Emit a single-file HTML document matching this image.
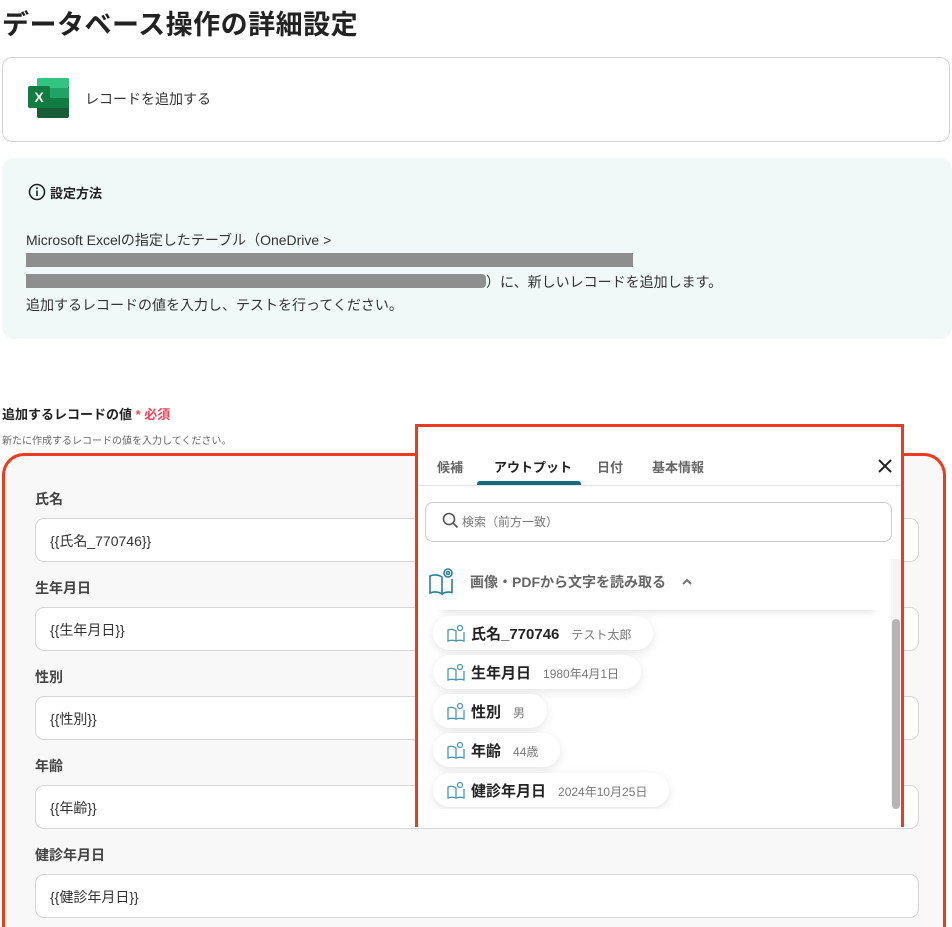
<!DOCTYPE html>
<html><head><meta charset="utf-8"><style>
*{box-sizing:border-box;margin:0;padding:0}
html,body{width:952px;height:927px;overflow:hidden}
body{background:#fff;font-family:"Liberation Sans","Noto Sans CJK JP",sans-serif;color:#222;position:relative}
.abs{position:absolute}
h1{position:absolute;left:2px;top:3px;font-size:27px;font-weight:bold;color:#222;letter-spacing:0.5px}
.card{left:2px;top:57px;width:948px;height:85px;border:1px solid #d4d4d4;border-radius:10px}
.info{left:2px;top:158px;width:950px;height:181px;background:#f0f8f8;border-radius:12px}
.t{font-size:14px;color:#333}
.bar{background:#8e8e8e;height:14px}
.form{left:2px;top:453px;width:944px;height:474px;border:3px solid #f03a1e;border-bottom:none;border-radius:22px 22px 0 0;background:#f8f8f8}
.lbl{font-size:14px;font-weight:bold;color:#444;left:35px}
.inp{left:35px;width:884px;height:44px;background:#fff;border:1px solid #d6d6d6;border-radius:9px;font-size:14px;color:#333;padding:12px 14px}
.pop{left:415px;top:424px;width:489px;height:403px;border:3px solid #f03a1e;background:#fff}
.tab{top:30px;font-size:13px;color:#555;font-weight:bold}
.pill{left:15px;height:34px;border-radius:17px;background:#fff;box-shadow:0 3px 10px rgba(0,0,0,.1);font-size:15px;font-weight:bold;color:#222;padding:7px 22px 0 14px;white-space:nowrap}
.pill small{font-size:12px;color:#777;font-weight:normal;margin-left:12px}
.pill svg{vertical-align:-3px;margin-right:6px}
</style></head><body>
<h1>データベース操作の詳細設定</h1>
<div class="abs card">
 <svg class="abs" style="left:25px;top:20px" width="42" height="40" viewBox="0 0 42 40">
  <rect x="9" y="0" width="32" height="40" rx="2" fill="#185c37"/>
  <rect x="9" y="0" width="32" height="10" fill="#33c481" rx="2"/>
  <rect x="25" y="10" width="16" height="10" fill="#21a366"/>
  <rect x="9" y="10" width="16" height="10" fill="#21a366"/>
  <rect x="25" y="20" width="16" height="10" fill="#107c41"/>
  <rect x="9" y="20" width="16" height="10" fill="#107c41"/>
  <rect x="0" y="8" width="22" height="22" rx="2" fill="#107c41"/>
  <text x="11" y="24" font-size="14" font-weight="bold" fill="#fff" text-anchor="middle" font-family="Liberation Sans">X</text>
 </svg>
 <div class="abs t" style="left:82px;top:31px">レコードを追加する</div>
</div>
<div class="abs info">
 <svg class="abs" style="left:26px;top:25px" width="18" height="18" viewBox="0 0 18 18"><circle cx="9" cy="9" r="7.5" fill="none" stroke="#222" stroke-width="1.6"/><rect x="8.2" y="7.5" width="1.6" height="5.5" fill="#222"/><circle cx="9" cy="5.2" r="1" fill="#222"/></svg>
 <div class="abs" style="left:48px;top:25px;font-size:13px;font-weight:bold">設定方法</div>
 <div class="abs t" style="left:24px;top:72px">Microsoft Excelの指定したテーブル（OneDrive &gt;</div>
 <div class="abs bar" style="left:24px;top:95px;width:607px"></div>
 <div class="abs bar" style="left:24px;top:116px;width:460px;border-radius:0 4px 4px 0"></div>
 <div class="abs t" style="left:484px;top:114px">）に、新しいレコードを追加します。</div>
 <div class="abs t" style="left:24px;top:137px">追加するレコードの値を入力し、テストを行ってください。</div>
</div>
<div class="abs" style="left:2px;top:404px;font-size:13px;font-weight:bold">追加するレコードの値 <span style="color:#f0445a">* 必須</span></div>
<div class="abs" style="left:2px;top:432px;font-size:10px;color:#666">新たに作成するレコードの値を入力してください。</div>
<div class="abs form"></div>
<div class="abs lbl" style="top:489px">氏名</div><div class="abs inp" style="top:518px">{{氏名_770746}}</div>
<div class="abs lbl" style="top:578px">生年月日</div><div class="abs inp" style="top:607px">{{生年月日}}</div>
<div class="abs lbl" style="top:667px">性別</div><div class="abs inp" style="top:696px">{{性別}}</div>
<div class="abs lbl" style="top:756px">年齢</div><div class="abs inp" style="top:785px">{{年齢}}</div>
<div class="abs lbl" style="top:845px">健診年月日</div><div class="abs inp" style="top:874px">{{健診年月日}}</div>

<div class="abs pop">
 <div class="abs tab" style="left:19px;color:#666">候補</div>
 <div class="abs tab" style="left:76px;color:#222">アウトプット</div>
 <div class="abs tab" style="left:179px;color:#666">日付</div>
 <div class="abs tab" style="left:234px;color:#666">基本情報</div>
 <div class="abs" style="left:59px;top:54px;width:104px;height:4px;background:#146c80;border-radius:3px 3px 0 0"></div>
 <div class="abs" style="left:0;top:58px;width:483px;height:1px;background:#e2e2e2"></div>
 <svg class="abs" style="left:459px;top:31px" width="16" height="16" viewBox="0 0 16 16"><path d="M2 2L14 14M14 2L2 14" stroke="#222" stroke-width="2"/></svg>
 <div class="abs" style="left:7px;top:75px;width:467px;height:40px;border:1px solid #ccc;border-radius:8px"></div>
 <svg class="abs" style="left:24px;top:85px" width="17" height="17" viewBox="0 0 17 17"><circle cx="7" cy="7" r="5.5" fill="none" stroke="#555" stroke-width="1.6"/><path d="M11 11L15.5 15.5" stroke="#555" stroke-width="1.6"/></svg>
 <div class="abs" style="left:44px;top:86px;font-size:12px;color:#777">検索（前方一致）</div>
 <div class="abs" style="left:473px;top:132px;width:10px;height:250px;background:#f4f4f4"></div>
 <div class="abs" style="left:474px;top:192px;width:8px;height:190px;background:#b5b5b5;border-radius:4px"></div>
 <div class="abs" style="left:20px;top:165px;width:440px;height:18px;box-shadow:0 6px 8px -4px rgba(0,0,0,.12)"></div>
 <svg class="abs" style="left:10px;top:140px" width="28" height="30" viewBox="0 0 28 30"><g fill="none" stroke="#2a7f95" stroke-width="1.6"><path d="M2 9v17c4-1.5 8-1.5 12 1V10C10 7.5 6 7.5 2 9z"/><path d="M14 27c3-2 6-2.5 10-1.5V12"/><circle cx="20" cy="6" r="4"/><circle cx="20" cy="6" r="1.5"/></g></svg>
 <div class="abs" style="left:52px;top:145px;font-size:14px;font-weight:bold;color:#666">画像・PDFから文字を読み取る</div>
 <svg class="abs" style="left:263px;top:150px" width="12" height="10" viewBox="0 0 12 10"><path d="M2 7L6 3L10 7" fill="none" stroke="#777" stroke-width="2"/></svg>
 <div class="abs pill" style="top:189px"><svg width="18" height="18" viewBox="0 0 18 18"><g fill="none" stroke="#4a98ad" stroke-width="1.3"><path d="M1 6v11c3-1 5-1 8 0V7C6 5 4 5 1 6z"/><path d="M9 17c3-1 5-1 8 0V8"/><circle cx="13" cy="4" r="2.5"/></g></svg>氏名_770746<small>テスト太郎</small></div>
 <div class="abs pill" style="top:228px"><svg width="18" height="18" viewBox="0 0 18 18"><g fill="none" stroke="#4a98ad" stroke-width="1.3"><path d="M1 6v11c3-1 5-1 8 0V7C6 5 4 5 1 6z"/><path d="M9 17c3-1 5-1 8 0V8"/><circle cx="13" cy="4" r="2.5"/></g></svg>生年月日<small>1980年4月1日</small></div>
 <div class="abs pill" style="top:267px"><svg width="18" height="18" viewBox="0 0 18 18"><g fill="none" stroke="#4a98ad" stroke-width="1.3"><path d="M1 6v11c3-1 5-1 8 0V7C6 5 4 5 1 6z"/><path d="M9 17c3-1 5-1 8 0V8"/><circle cx="13" cy="4" r="2.5"/></g></svg>性別<small>男</small></div>
 <div class="abs pill" style="top:306px"><svg width="18" height="18" viewBox="0 0 18 18"><g fill="none" stroke="#4a98ad" stroke-width="1.3"><path d="M1 6v11c3-1 5-1 8 0V7C6 5 4 5 1 6z"/><path d="M9 17c3-1 5-1 8 0V8"/><circle cx="13" cy="4" r="2.5"/></g></svg>年齢<small>44歳</small></div>
 <div class="abs pill" style="top:346px"><svg width="18" height="18" viewBox="0 0 18 18"><g fill="none" stroke="#4a98ad" stroke-width="1.3"><path d="M1 6v11c3-1 5-1 8 0V7C6 5 4 5 1 6z"/><path d="M9 17c3-1 5-1 8 0V8"/><circle cx="13" cy="4" r="2.5"/></g></svg>健診年月日<small>2024年10月25日</small></div>
 <div class="abs" style="left:0;top:382px;width:483px;height:18px;background:#fff"></div>
</div>
</body></html>
